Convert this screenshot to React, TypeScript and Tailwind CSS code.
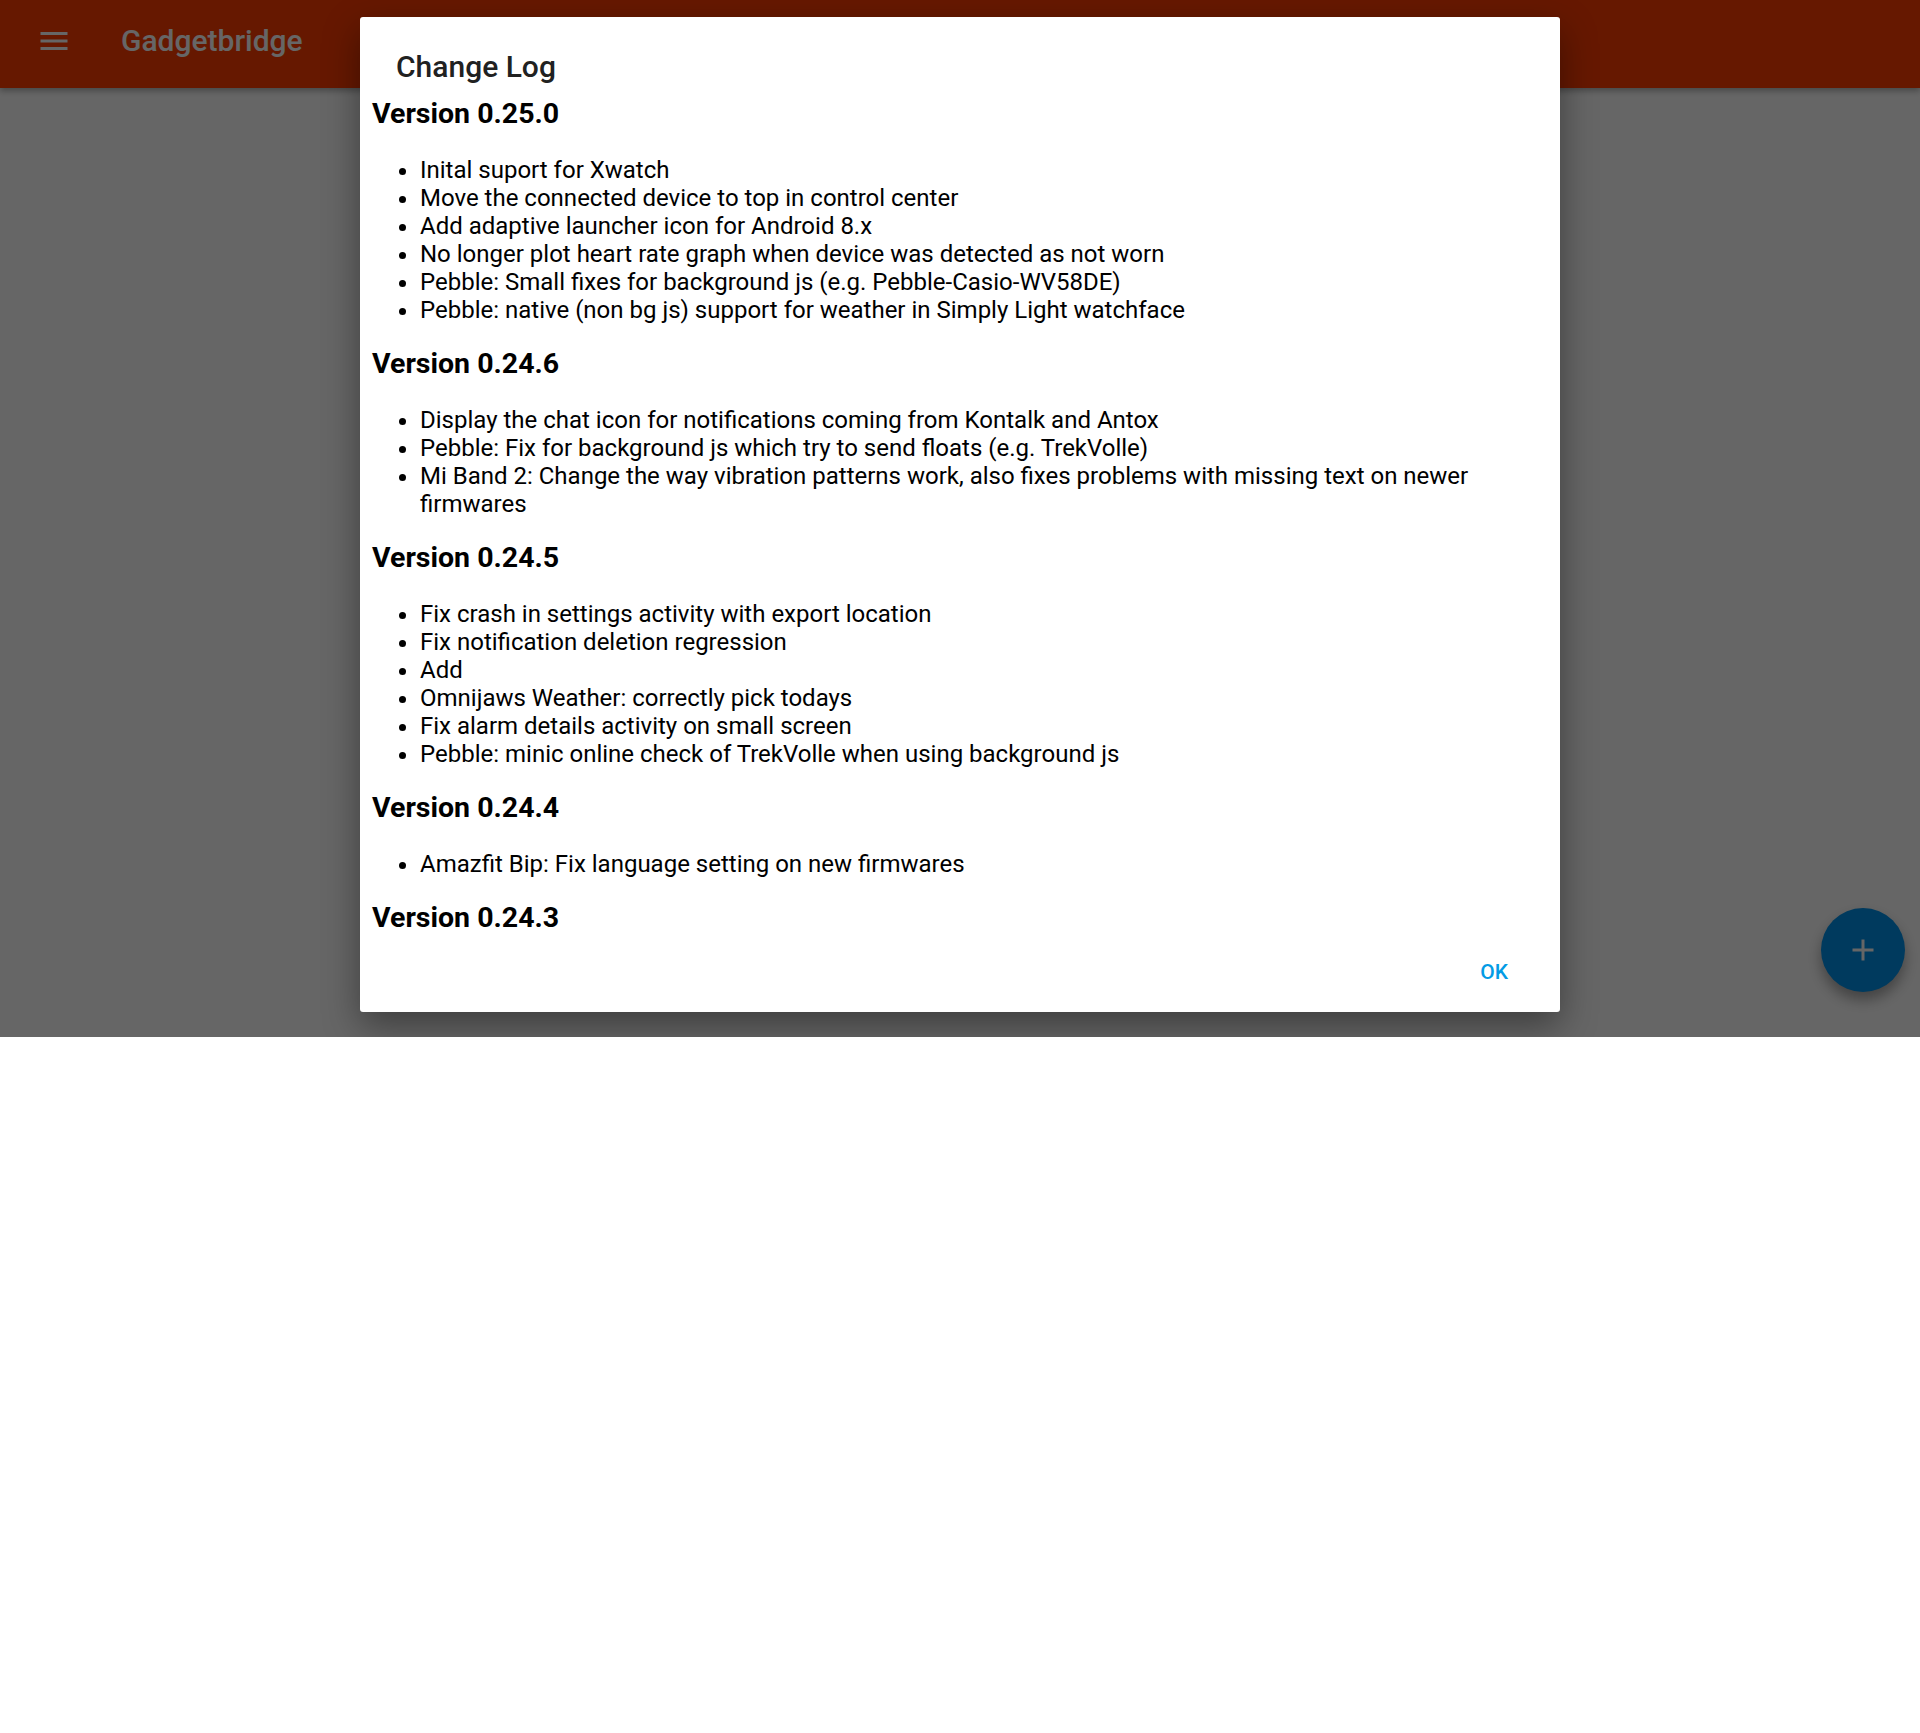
import React from "react";

type Release = {
	version: string;
	changes: string[];
};

// only what fits in the dialog's visible area
const releases: Release[] = [
	{
		version: "0.25.0",
		changes: [
			"Inital suport for Xwatch",
			"Move the connected device to top in control center",
			"Add adaptive launcher icon for Android 8.x",
			"No longer plot heart rate graph when device was detected as not worn",
			"Pebble: Small fixes for background js (e.g. Pebble-Casio-WV58DE)",
			"Pebble: native (non bg js) support for weather in Simply Light watchface",
		],
	},
	{
		version: "0.24.6",
		changes: [
			"Display the chat icon for notifications coming from Kontalk and Antox",
			"Pebble: Fix for background js which try to send floats (e.g. TrekVolle)",
			"Mi Band 2: Change the way vibration patterns work, also fixes problems with missing text on newer firmwares",
		],
	},
	{
		version: "0.24.5",
		changes: [
			"Fix crash in settings activity with export location",
			"Fix notification deletion regression",
			"Add",
			"Omnijaws Weather: correctly pick todays",
			"Fix alarm details activity on small screen",
			"Pebble: minic online check of TrekVolle when using background js",
		],
	},
	{
		version: "0.24.4",
		changes: ["Amazfit Bip: Fix language setting on new firmwares"],
	},
	{
		version: "0.24.3",
		changes: [],
	},
];

const MenuIcon: React.FC = () => (
	<svg width="36" height="36" viewBox="0 0 24 24" fill="currentColor">
		<path d="M3 18h18v-2H3v2zm0-5h18v-2H3v2zm0-7v2h18V6H3z" />
	</svg>
);

export default function App() {
	return (
		<div
			className="w-[1920px] h-[1733px] bg-white"
			style={{fontFamily: "Roboto, 'Noto Sans', sans-serif"}}
		>
			<div className="relative w-[1920px] h-[1037px] bg-white overflow-hidden">
				{/* app bar */}
				<div className="h-[88px] bg-[#ff3d00] flex items-center text-white shadow-[0_3px_6px_rgba(0,0,0,0.3)] pb-[6px]">
					<div className="w-[36px] ml-[36px] flex items-center">
						<MenuIcon />
					</div>
					<div className="ml-[49px] text-[30px] font-medium leading-none">
						Gadgetbridge
					</div>
				</div>

				{/* fab */}
				<div className="absolute left-[1821px] top-[908px] w-[84px] h-[84px] rounded-full bg-[#0091ea] shadow-[0_8px_14px_rgba(0,0,0,0.35)] flex items-center justify-center text-white">
					<svg width="36" height="36" viewBox="0 0 24 24" fill="currentColor">
						<path d="M19 13h-6v6h-2v-6H5v-2h6V5h2v6h6v2z" />
					</svg>
				</div>

				{/* scrim */}
				<div className="absolute inset-0 bg-black/60" />

				{/* dialog */}
				<div className="absolute left-[360px] top-[17px] w-[1200px] h-[995px] bg-white rounded-[3px] shadow-[0_14px_36px_rgba(0,0,0,0.4)] flex flex-col">
					<div className="pt-[33px] px-[36px] text-[30px] leading-[33px] font-medium text-[#212121]">
						Change Log
					</div>

					<div className="h-[862px] overflow-hidden pl-[12px] pr-[13px] pt-[15px] text-black">
						{releases.map((release) => (
							<div key={release.version}>
								<h3 className="text-[28.5px] leading-[32px] font-bold">
									Version {release.version}
								</h3>
								{release.changes.length > 0 && (
									<ul className="list-disc pl-[48px] mt-[26px] mb-[24px] text-[24px] leading-[28px]">
										{release.changes.map((change, idx) => (
											<li key={idx}>{change}</li>
										))}
									</ul>
								)}
							</div>
						))}
					</div>

					<div className="flex justify-end pr-[40px] pb-[12px] mt-auto">
						<button className="h-[54px] px-[12px] text-[21px] font-medium text-[#039be5] uppercase">
							OK
						</button>
					</div>
				</div>
			</div>
		</div>
	);
}
